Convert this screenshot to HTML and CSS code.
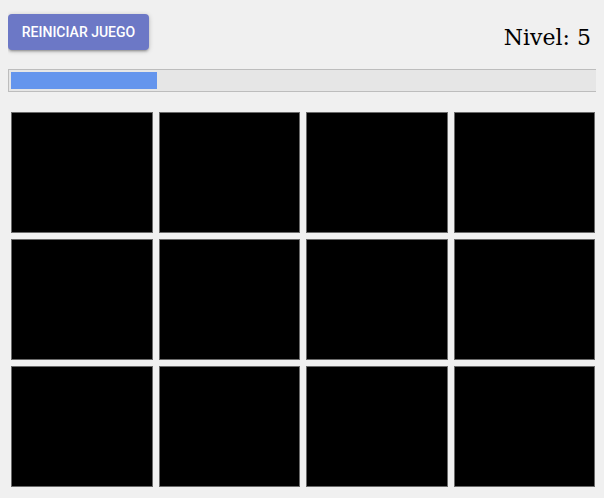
FILE: index.html
```html
<!DOCTYPE html>
<html lang="es">
<head>
<meta charset="utf-8">
<title>Memoria</title>
<link rel="stylesheet" href="styles.css">
</head>
<body>
<div class="app">
  <header class="top">
    <button class="btn-reset" type="button">REINICIAR JUEGO</button>
    <div class="level">Nivel: 5</div>
  </header>
  <div class="progress"><div class="progress-fill" style="width:25%"></div></div>
  <main class="board">
    <div class="tile"></div><div class="tile"></div><div class="tile"></div><div class="tile"></div>
    <div class="tile"></div><div class="tile"></div><div class="tile"></div><div class="tile"></div>
    <div class="tile"></div><div class="tile"></div><div class="tile"></div><div class="tile"></div>
  </main>
</div>
</body>
</html>
```
FILE: styles.css
```css
html, body {
  background: #f0f0f0;
}
body {
  margin: 8px;
  font-family: "DejaVu Serif", serif;
}
.app {
  width: 590px;
}
.top {
  display: flex;
  justify-content: space-between;
  align-items: flex-start;
  padding-top: 6px;
  height: 55px;
}
.btn-reset {
  height: 36px;
  width: 141px;
  padding: 0;
  border: none;
  border-radius: 4px;
  background: #6c78c6;
  color: #fff;
  font-family: Roboto, "Liberation Sans", sans-serif;
  font-weight: 500;
  font-size: 14px;
  letter-spacing: 0;
  box-shadow: 0 2px 2px 0 rgba(0,0,0,.14), 0 3px 1px -2px rgba(0,0,0,.12), 0 1px 5px 0 rgba(0,0,0,.2);
}
.level {
  font-size: 22px;
  line-height: 26px;
  margin-top: 11px;
  margin-right: 7px;
  color: #000;
}
.progress {
  height: 23px;
  box-sizing: border-box;
  border: 1px solid #bdbdbd;
  background: #e6e6e6;
  padding: 2px;
}
.progress-fill {
  height: 100%;
  background: #6495ed;
}
.board {
  display: grid;
  grid-template-columns: repeat(4, 1fr);
  margin-top: 17px;
}
.tile {
  margin: 3px;
  height: 121px;
  box-sizing: border-box;
  background: #000;
  border: 1px solid #6a6a6a;
}
```
